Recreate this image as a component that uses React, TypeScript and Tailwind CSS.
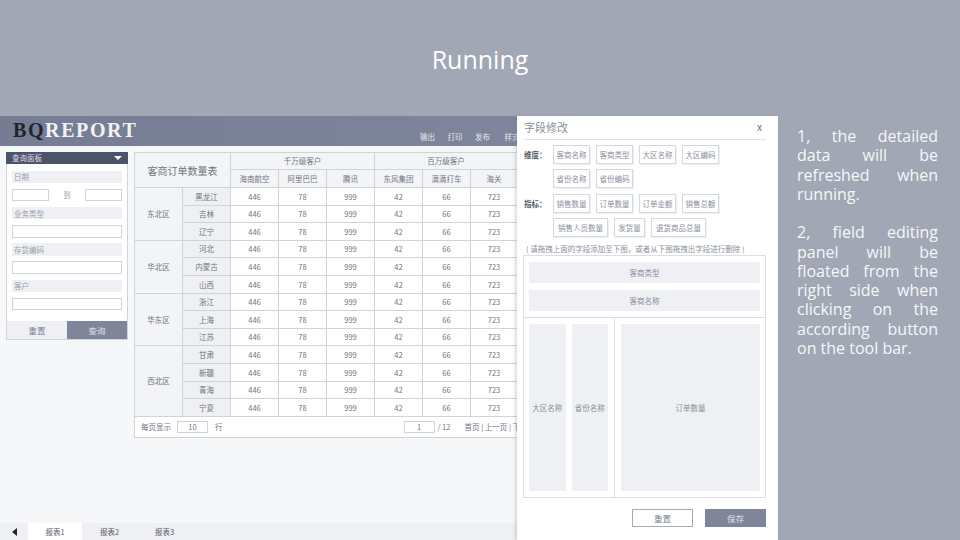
const cjk = { fontFamily: '"Noto Sans CJK SC", "Noto Sans", sans-serif' };
const regions = [
  { name: "东北区", provinces: ["黑龙江", "吉林", "辽宁"] },
  { name: "华北区", provinces: ["河北", "内蒙古", "山西"] },
  { name: "华东区", provinces: ["浙江", "上海", "江苏"] },
  { name: "西北区", provinces: ["甘肃", "新疆", "青海", "宁夏"] },
];
const values = ["446", "78", "999", "42", "66", "723"];

function Tag({ children, wide }: { children: string; wide?: string }) {
  return (
    <div className={`h-[19px] flex items-center justify-center border border-[#d5d8de] shadow-[1px_1px_0_#eef0f3] text-[7.5px] text-[#8a8f9c] whitespace-nowrap ${wide ?? "w-[37px]"}`}>
      {children}
    </div>
  );
}

function FieldLabel({ children }: { children: string }) {
  return <div className="h-[12.5px] bg-[#eef0f3] pl-[2px] flex items-center text-[7.5px] text-[#9a9ea9]">{children}</div>;
}

function BoxInput({ className }: { className?: string }) {
  return <div className={`h-[12.5px] border border-[#d0d3da] bg-white ${className ?? ""}`} />;
}

function QueryPanel() {
  return (
    <div className="w-[122px] h-[188px] flex flex-col border border-[#d0d3da] bg-white shrink-0">
      <div className="h-[12px] -mx-px -mt-px mb-px bg-[#4d5369] text-[7.5px] text-[#d9dce3] flex items-center justify-between pl-[6px] pr-[6px] shrink-0">
        <span>查询面板</span>
        <span className="w-0 h-0 border-l-[4px] border-r-[4px] border-t-[4px] border-l-transparent border-r-transparent border-t-white" />
      </div>
      <div className="flex-1 px-[5px] pt-[5.5px] flex flex-col gap-[5.7px]">
        <FieldLabel>日期</FieldLabel>
        <div className="flex items-center justify-between text-[7.5px] text-[#9a9ea9]">
          <BoxInput className="w-[37px]" />
          <span>到</span>
          <BoxInput className="w-[37px]" />
        </div>
        <FieldLabel>业务类型</FieldLabel>
        <BoxInput />
        <FieldLabel>存货编码</FieldLabel>
        <BoxInput />
        <FieldLabel>客户</FieldLabel>
        <BoxInput />
      </div>
      <div className="h-[18px] flex text-[8.5px] shrink-0">
        <div className="w-[60px] bg-[#eef0f3] text-[#7d8290] flex items-center justify-center">重置</div>
        <div className="flex-1 bg-[#7f869b] text-[#dfe1e7] flex items-center justify-center">查询</div>
      </div>
    </div>
  );
}

const line = "border-r border-b border-[#cfd3db]";

function ReportTable() {
  return (
    <div className="w-[384px] shrink-0 border-l border-t border-[#cfd3db] bg-white text-[7.5px] text-[#6f7480]">
      <div className="grid grid-cols-[48px_48px_48px_48px_48px_48px_48px_47px] grid-rows-[17px_18px]">
        <div className={`col-span-2 row-span-2 flex items-center justify-center text-[10px] bg-[#f3f4f6] ${line}`}>客商订单数量表</div>
        <div className={`col-span-3 flex items-center justify-center bg-[#f3f4f6] ${line}`}>千万级客户</div>
        <div className={`col-span-3 flex items-center justify-center bg-[#f3f4f6] ${line}`}>百万级客户</div>
        {["海南航空", "阿里巴巴", "腾讯", "东风集团", "滴滴打车", "海关"].map((h) => (
          <div key={h} className={`flex items-center justify-center bg-[#f3f4f6] ${line}`}>{h}</div>
        ))}
      </div>
      <div className="grid grid-cols-[48px_48px_48px_48px_48px_48px_48px_47px] auto-rows-[17.6px]">
        {regions.map((r) => (
          <div key={r.name} className="contents">
            {r.provinces.map((p, i) => (
              <div key={p} className="contents">
                {i === 0 && (
                  <div
                    className={`flex items-center justify-center bg-[#f3f4f6] ${line}`}
                    style={{ gridRow: `span ${r.provinces.length}` }}
                  >
                    {r.name}
                  </div>
                )}
                <div className={`col-start-2 flex items-center justify-center bg-[#eef0f3] ${line}`}>{p}</div>
                {values.map((v, j) => (
                  <div key={j} className={`flex items-center justify-center ${line}`}>{v}</div>
                ))}
              </div>
            ))}
          </div>
        ))}
      </div>
      <div className="h-[21px] border-b border-[#cfd3db] flex items-center pl-[6px] whitespace-nowrap">
        <span className="shrink-0">每页显示</span>
        <span className="ml-[6px] w-[31px] h-[12px] border border-[#cfd3db] flex items-center justify-center shrink-0">10</span>
        <span className="ml-[7px] shrink-0">行</span>
        <span className="ml-[181px] w-[31px] h-[12px] border border-[#cfd3db] flex items-center justify-center shrink-0">1</span>
        <span className="ml-[3px] shrink-0">/ 12</span>
        <span className="ml-[14px] shrink-0">首页 | 上一页 | 下一页 | 末页</span>
      </div>
    </div>
  );
}

function ReportApp() {
  return (
    <div className="w-[517px] h-full flex flex-col overflow-hidden bg-[#f6f7f9] shrink-0">
      <div className="h-[30px] bg-gradient-to-r from-[#767d92] to-[#7f869b] flex items-center pl-[13px] relative shrink-0">
        <span className="text-[20px] font-bold tracking-[1.6px] leading-none mt-[-2px]" style={{ fontFamily: '"Liberation Serif", serif' }}>
          <span className="text-[#20242f]">BQ</span>
          <span className="text-[#f1f2f5]">REPORT</span>
        </span>
        <div className="ml-auto flex gap-[12.5px] text-[7.5px] text-[#e6e8ed] mt-[12px] mr-[-13px] w-[110px] whitespace-nowrap">
          <span>输出</span>
          <span>打印</span>
          <span>发布</span>
          <span className="ml-[2px]">样式</span>
        </div>
      </div>
      <div className="flex-1 flex gap-[6px] pl-[6px] pt-[6px] items-start min-h-0">
        <QueryPanel />
        <ReportTable />
      </div>
      <div className="h-[17px] bg-[#eef0f3] flex text-[7.5px] text-[#555a66] shrink-0">
        <div className="w-[28px] flex items-center justify-center">
          <span className="w-0 h-0 border-t-[4px] border-b-[4px] border-r-[5px] border-t-transparent border-b-transparent border-r-[#20242f]" />
        </div>
        <div className="w-[54px] bg-white flex items-center justify-center">报表1</div>
        <div className="w-[55px] flex items-center justify-center">报表2</div>
        <div className="w-[55px] flex items-center justify-center">报表3</div>
      </div>
    </div>
  );
}

function FieldPanel() {
  return (
    <div className="w-[261px] h-full bg-white shadow-[-2px_0_3px_rgba(120,125,140,0.25)] px-[6px] flex flex-col shrink-0 relative">
      <div className="w-[243px] h-[24px] border-b border-[#e3e5e9] flex items-center justify-between pl-[1px] pr-[4px] shrink-0">
        <span className="text-[11px] text-[#8a8f9c]">字段修改</span>
        <span className="text-[10px] text-[#666b78]" style={{ fontFamily: '"Liberation Sans", sans-serif' }}>x</span>
      </div>
      <div className="flex mt-[5px] shrink-0">
        <div className="w-[30px] h-[19px] flex items-center pl-[1px] text-[7.5px] font-bold text-[#555a66]">维度：</div>
        <div className="w-[170px] flex flex-wrap gap-x-[6px] gap-y-[5px]">
          {["客商名称", "客商类型", "大区名称", "大区编码", "省份名称", "省份编码"].map((t) => (
            <Tag key={t}>{t}</Tag>
          ))}
        </div>
      </div>
      <div className="flex mt-[6px] shrink-0">
        <div className="w-[30px] h-[19px] flex items-center pl-[1px] text-[7.5px] font-bold text-[#555a66]">指标：</div>
        <div className="w-[170px] flex flex-wrap gap-x-[6px] gap-y-[5px]">
          {["销售数量", "订单数量", "订单金额", "销售总额"].map((t) => (
            <Tag key={t}>{t}</Tag>
          ))}
          <Tag wide="w-[55px]">销售人员数量</Tag>
          <Tag wide="w-[31px]">发货量</Tag>
          <Tag wide="w-[55px]">退货商品总量</Tag>
        </div>
      </div>
      <div className="h-[18px] pt-[6px] pl-[3px] flex items-center text-[7.5px] text-[#8a8f9c] whitespace-nowrap shrink-0">( 请拖拽上面的字段添加至下图，或者从下图拖拽出字段进行删除 )</div>
      <div className="w-[243px] h-[243px] border border-[#dcdee3] flex flex-col text-[7.5px] text-[#8a8f9c] shrink-0">
        <div className="h-[61.5px] border-b border-[#dcdee3] px-[5px] pt-[6px] flex flex-col gap-[7px] shrink-0">
          <div className="h-[21px] bg-[#eef0f3] flex items-center justify-center">客商类型</div>
          <div className="h-[21px] bg-[#eef0f3] flex items-center justify-center">客商名称</div>
        </div>
        <div className="flex-1 flex min-h-0">
          <div className="w-[91px] border-r border-[#dcdee3] pl-[5px] pr-[6px] py-[6px] flex gap-[6px] shrink-0">
            <div className="flex-1 bg-[#eef0f3] flex items-center justify-center whitespace-nowrap">大区名称</div>
            <div className="flex-1 bg-[#eef0f3] flex items-center justify-center whitespace-nowrap">省份名称</div>
          </div>
          <div className="flex-1 pl-[6px] pr-[5px] py-[6px] flex">
            <div className="flex-1 bg-[#eef0f3] flex items-center justify-center">订单数量</div>
          </div>
        </div>
      </div>
      <div className="flex justify-end gap-[12px] mt-[11px] w-[243px] text-[8.5px] shrink-0">
        <div className="w-[61px] h-[18px] border border-[#a5a9b5] text-[#7d8290] flex items-center justify-center">重置</div>
        <div className="w-[61px] h-[18px] bg-[#7f869b] text-[#dfe1e7] flex items-center justify-center">保存</div>
      </div>
    </div>
  );
}

export default function App() {
  return (
    <div className="w-[960px] h-[540px] overflow-hidden bg-[#a1a7b5] flex flex-col" style={cjk}>
      <div className="h-[116px] pt-[3px] flex items-center justify-center text-white text-[25px] shrink-0" style={{ fontFamily: '"Open Sans", sans-serif' }}>
        Running
      </div>
      <div className="flex-1 flex min-h-0">
        <ReportApp />
        <FieldPanel />
        <div className="w-[141px] ml-[19px] pt-[11px] text-[#f6f7f9] text-[16px] leading-[19.25px] text-justify" style={{ fontFamily: '"Open Sans", sans-serif' }}>
          <p>1, the detailed data will be refreshed when running.</p>
          <p className="mt-[19.25px]">2, field editing panel will be floated from the right side when clicking on the according button on the tool bar.</p>
        </div>
      </div>
    </div>
  );
}
